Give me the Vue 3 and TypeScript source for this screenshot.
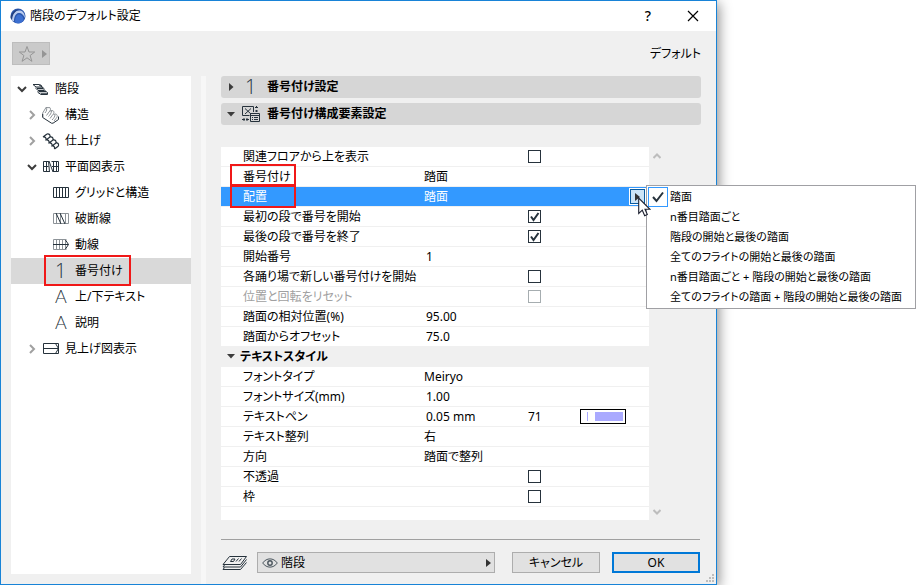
<script setup lang="ts">
import { ref } from 'vue'

interface TreeItem {
  label: string
  icon: string
  level: number
  state?: 'open' | 'closed'
  selected?: boolean
}

interface Row {
  id: string
  label: string
  kind: 'check' | 'choice' | 'number' | 'pen' | 'section'
  value?: string
  checked?: boolean
  disabled?: boolean
  marked?: boolean
  active?: boolean
}

const tree: TreeItem[] = [
  { label: '階段', icon: 'stair', level: 0, state: 'open' },
  { label: '構造', icon: 'structure', level: 1, state: 'closed' },
  { label: '仕上げ', icon: 'finish', level: 1, state: 'closed' },
  { label: '平面図表示', icon: 'plan', level: 1, state: 'open' },
  { label: 'グリッドと構造', icon: 'grid', level: 2 },
  { label: '破断線', icon: 'break', level: 2 },
  { label: '動線', icon: 'walk', level: 2 },
  { label: '番号付け', icon: 'number', level: 2, selected: true },
  { label: '上/下テキスト', icon: 'letter', level: 2 },
  { label: '説明', icon: 'letter', level: 2 },
  { label: '見上げ図表示', icon: 'ceiling', level: 1, state: 'closed' },
]

const rows = ref<Row[]>([
  { id: 'stories', label: '関連フロアから上を表示', kind: 'check', checked: false },
  { id: 'numbering', label: '番号付け', kind: 'choice', value: '踏面', marked: true },
  { id: 'placement', label: '配置', kind: 'choice', value: '踏面', marked: true, active: true },
  { id: 'first', label: '最初の段で番号を開始', kind: 'check', checked: true },
  { id: 'last', label: '最後の段で番号を終了', kind: 'check', checked: true },
  { id: 'start', label: '開始番号', kind: 'number', value: '1' },
  { id: 'landing', label: '各踊り場で新しい番号付けを開始', kind: 'check', checked: false },
  { id: 'reset', label: '位置と回転をリセット', kind: 'check', checked: false, disabled: true },
  { id: 'relative', label: '踏面の相対位置(%)', kind: 'number', value: '95.00' },
  { id: 'offset', label: '踏面からオフセット', kind: 'number', value: '75.0' },
  { id: 'style', label: 'テキストスタイル', kind: 'section' },
  { id: 'font', label: 'フォントタイプ', kind: 'choice', value: 'Meiryo' },
  { id: 'size', label: 'フォントサイズ(mm)', kind: 'number', value: '1.00' },
  { id: 'pen', label: 'テキストペン', kind: 'pen', value: '0.05 mm' },
  { id: 'align', label: 'テキスト整列', kind: 'choice', value: '右' },
  { id: 'direction', label: '方向', kind: 'choice', value: '踏面で整列' },
  { id: 'opaque', label: '不透過', kind: 'check', checked: false },
  { id: 'frame', label: '枠', kind: 'check', checked: false },
])

const penIndex = ref('71')
const layer = ref('階段')

const choices: string[] = [
  '踏面',
  'n番目踏面ごと',
  '階段の開始と最後の踏面',
  '全てのフライトの開始と最後の踏面',
  'n番目踏面ごと + 階段の開始と最後の踏面',
  '全てのフライトの踏面 + 階段の開始と最後の踏面',
]
</script>

<template>
  <div class="page">
    <section class="dialog" role="dialog" aria-labelledby="dialog-title">
      <header class="titlebar">
        <svg class="logo" viewBox="0 0 16 16" aria-hidden="true">
          <circle cx="8" cy="8" r="7.5" fill="#2b57ad" />
          <path d="M1 11C2 5 6 2 10 2.500C13 3 15 6 15 10C13 6 11 4.500 8.500 5C5.500 5.500 4 9 4 13.500C2.500 13 1.500 12 1 11Z" fill="#b9cbee" />
          <path d="M5 14.500C5 9 7 6.500 9 6.500C11.500 6.500 13.500 9 13.500 12.500C11 15.500 8 16 5 14.500Z" fill="#3c6fd0" />
          <path d="M.5 10C1 5 5 1 9.500 1.200C5.500 2.500 2.500 6 2 12Z" fill="#23407f" />
        </svg>
        <h1 id="dialog-title">階段のデフォルト設定</h1>
        <button class="caption help" type="button">?</button>
        <button class="caption close" type="button" aria-label="閉じる">
          <svg viewBox="0 0 12 12"><path d="M1 1L11 11M11 1L1 11" fill="none" stroke="#000" stroke-width="1.200" /></svg>
        </button>
      </header>

      <div class="toolbar">
        <button class="favorite" type="button" aria-label="お気に入り">
          <svg class="star" viewBox="0 0 18 18"><path d="M9 1.500L11 7H16.700L12.100 10.500L13.900 16.300L9 12.800L4.100 16.300L5.900 10.500L1.300 7H7Z" fill="none" stroke="#959595" /></svg>
          <svg class="arrow" viewBox="0 0 5 8"><path d="M0 0L5 4L0 8Z" fill="#959595" /></svg>
        </button>
        <span>デフォルト</span>
      </div>

      <div class="main">
        <ul class="tree">
          <li v-for="item in tree" :key="item.label" :class="['node', 'level' + item.level, { selected: item.selected }]">
            <span class="twisty">
              <svg v-if="item.state === 'open'" viewBox="0 0 16 16"><path d="M4 6L8 10L12 6" fill="none" stroke="#3c3c3c" stroke-width="2" /></svg>
              <svg v-if="item.state === 'closed'" viewBox="0 0 16 16"><path d="M6 4L10 8L6 12" fill="none" stroke="#a0a0a0" stroke-width="2" /></svg>
            </span>
            <svg class="icon" viewBox="0 0 18 18" aria-hidden="true" fill="none" stroke="#26323c">
              <template v-if="item.icon === 'stair'">
                <path d="M1 4.500H7L10 7H4ZM4 7.500V8.500L6 10.500H12V8.500L10 7M6 11V12.500L9 14.500H15.500V12.500L12.500 10.500M7 5H9L10 7" />
                <path d="M5 8.500H11M7 11.500H14M9 14H15" stroke-width="1.500" />
              </template>
              <template v-else-if="item.icon === 'structure'">
                <path d="M.7 11V7L4 1.500L8 1.700C9 3 8.500 4.500 7 6L4.500 9.500M8 5L10 4.500C13 5 12 7.500 10.500 9L8 12.500M11.500 8.500L13.500 8C16 8.500 15.500 11 14 12.500L12 15M4 1.500C5.500 3 4.500 5 3 7M9.500 5C9.500 7 8 9 6.500 10.500M13 8.500C13 10.500 12 12 10 14" stroke="#8d9398" />
                <path d="M.7 8V11.500L9.500 17.200H11L16.500 13.500V10.500" />
              </template>
              <template v-else-if="item.icon === 'finish'">
                <path d="M5 2Q8.500 1.500 8 5Q11.500 4.500 11 8Q14.500 7.500 14 11Q17 10.500 16.500 14M1 5Q4.500 4.500 4 8Q7.500 7.500 7 11Q10.500 10.500 10 14Q13 13.500 12.500 17M5 2L1 5M8 5L4 8M11 8L7 11M14 11L10 14M16.500 14L12.500 17" stroke-width="1.200" />
              </template>
              <template v-else-if="item.icon === 'plan'">
                <path d="M6.500 3.500H1.500V13.500H7.500M4.500 3V14M1.500 8.500H6.500M9.500 3.500H16.500V13.500H11M11.500 3V14M14.500 3V14M10 8.500H17" />
                <path d="M6.500 3L7.500 14M7 3L11 14" />
              </template>
              <path v-else-if="item.icon === 'grid'" d="M1.500 3.500H16.500V13.500H1.500ZM4.500 3V14M7.500 3V14M10.500 3V14M13.500 3V14" />
              <template v-else-if="item.icon === 'break'">
                <path d="M1.500 3.500H16.500V13.500H1.500ZM4.500 3V14M13.500 3V14M8.500 3.500V14" stroke="#8d9398" />
                <path d="M4 3L9 14M8 3L13 14" />
              </template>
              <template v-else-if="item.icon === 'walk'">
                <path d="M14.500 3.500H1.500V13.500H14.500M4.500 3V14M7.500 3V14M10.500 3V14M13.500 3V14" stroke="#8d9398" />
                <path d="M1 8.500H16.500M13.500 4L16.500 8.500L13.500 13" />
              </template>
              <text v-else-if="item.icon === 'number'" class="glyph" x="3" y="16">1</text>
              <text v-else-if="item.icon === 'letter'" class="glyph letter" x="3" y="15">A</text>
              <path v-else d="M1.500 3.500H16.500V13.500H1.500ZM1.500 8.500H16.500M13.500 3.500L16.500 8.500L13.500 13.500" />
            </svg>
            <a href="#">{{ item.label }}</a>
            <span v-if="item.selected" class="mark tree-mark"></span>
          </li>
        </ul>
        <div class="splitter"></div>

        <div class="panel">
          <button class="section" type="button" aria-expanded="false">
            <svg class="fold" viewBox="0 0 10 10"><path d="M3 1L7.500 5L3 9Z" fill="#3c3c3c" /></svg>
            <svg class="icon" viewBox="0 0 18 18"><text class="glyph" x="3" y="16">1</text></svg>
            <span>番号付け設定</span>
          </button>
          <button class="section" type="button" aria-expanded="true">
            <svg class="fold" viewBox="0 0 10 10"><path d="M1 3H9L5 7.500Z" fill="#3c3c3c" /></svg>
            <svg class="icon" viewBox="0 0 18 18" fill="none" stroke="#26323c">
              <path d="M7.500 10.500H.5V1.500H11.500V7M3 3.500L9 9M9 3.500L3 9" />
              <path d="M8.500 8.500H17.500V16.500H8.500ZM8.500 10.500H17.500M10 12.500H11M12 12.500H16M10 14.500H11M12 14.500H16" />
              <path d="M13 2.500H16M14.500 1V3M13 6H16M14.500 5V7M0 14.500H3M2 13V16M4 14.500H7M5 13V16" />
            </svg>
            <span>番号付け構成要素設定</span>
          </button>

          <div class="list">
            <div class="sheet">
              <table>
                <colgroup><col class="c-name" /><col class="c-value" /><col class="c-extra" /><col /></colgroup>
                <tbody>
                  <tr v-for="row in rows" :key="row.id" :class="{ active: row.active, group: row.kind === 'section' }">
                    <th v-if="row.kind === 'section'" colspan="4" scope="colgroup">
                      <svg class="fold" viewBox="0 0 10 10"><path d="M1 3H9L5 7.500Z" fill="#3c3c3c" /></svg>{{ row.label }}
                    </th>
                    <template v-else>
                      <th scope="row" :class="{ disabled: row.disabled }">
                        <label :for="row.id">{{ row.label }}</label>
                        <span v-if="row.marked" class="mark row-mark"></span>
                      </th>
                      <td>
                        <input v-if="row.kind === 'number' || row.kind === 'pen'" :id="row.id" v-model="row.value" class="field" type="text" />
                        <output v-else-if="row.kind === 'choice'" :id="row.id">{{ row.value }}</output>
                      </td>
                      <td>
                        <span v-if="row.kind === 'check'" class="check">
                          <input :id="row.id" v-model="row.checked" type="checkbox" :disabled="row.disabled" />
                          <svg v-if="row.checked" viewBox="0 0 13 13"><path d="M3 6.500L5.500 10L10.500 3" fill="none" stroke="#26323c" stroke-width="2" /></svg>
                        </span>
                        <input v-if="row.kind === 'pen'" v-model="penIndex" class="pen-index" type="text" aria-label="ペン番号" />
                      </td>
                      <td>
                        <button v-if="row.kind === 'pen'" class="swatch" type="button" aria-label="ペンの色"><i></i><b></b></button>
                        <div v-if="row.active" class="popup-anchor">
                          <button class="expand" type="button" aria-label="配置の選択肢" aria-haspopup="menu">
                            <svg viewBox="0 0 5 8"><path d="M0 0L5 4L0 8Z" fill="#333" /></svg>
                          </button>
                          <div class="menu" role="menu">
                            <button v-for="(choice, i) in choices" :key="choice" type="button" role="menuitemradio" :aria-checked="i === 0">
                              <span :class="['tick', { on: i === 0 }]">
                                <svg v-if="i === 0" viewBox="0 0 18 18"><path d="M4 9L7.500 13L14 4.500" fill="none" stroke="#26323c" stroke-width="2" /></svg>
                              </span>
                              <span>{{ choice }}</span>
                            </button>
                          </div>
                          <svg class="pointer" viewBox="0 0 13 20" aria-hidden="true">
                            <path d="M.7 1V16.500L4.300 13.200L6.700 18.700L9.300 17.500L7 12.300H12Z" fill="#fff" stroke="#1c2030" stroke-width="1.100" />
                          </svg>
                        </div>
                      </td>
                    </template>
                  </tr>
                </tbody>
              </table>
            </div>
            <div class="scroll">
              <svg viewBox="0 0 8 6"><path d="M.5 5L4 1.500L7.500 5" fill="none" stroke="#bdbdbd" stroke-width="2" /></svg>
              <svg viewBox="0 0 8 6"><path d="M.5 1L4 4.500L7.500 1" fill="none" stroke="#bdbdbd" stroke-width="2" /></svg>
            </div>
          </div>

          <footer>
            <svg class="layers" viewBox="0 0 26 16" fill="none" stroke="#26323c" aria-hidden="true">
              <path d="M1 9.500L7.500 1.500H24.500L18.500 9.500Z" fill="#f0f0f0" />
              <path d="M8.500 6.500L10 4H13L11.500 6.500ZM14 6.500L16.500 3.500M17 6.500L19.500 3.500" />
              <path d="M2.500 10L1 12H18.500L24.500 4.500M2.500 12.500L1 14.500H18.500L24.500 7.500" />
            </svg>
            <div class="layer">
              <svg class="eye" viewBox="0 0 16 10" fill="none" stroke="#4a555d" aria-hidden="true"><path d="M.7 5C4.500-.5 11.500-.5 15.300 5C11.500 10.500 4.500 10.500 .7 5Z" /><circle cx="8" cy="5" r="2.200" stroke-width="1.400" /></svg>
              <select v-model="layer" aria-label="レイヤー"><option>階段</option></select>
              <svg class="arrow" viewBox="0 0 5 8"><path d="M0 0L5 4L0 8Z" fill="#333" /></svg>
            </div>
            <button class="push" type="button">キャンセル</button>
            <button class="push primary" type="button">OK</button>
          </footer>
        </div>
      </div>
      <svg class="grip" viewBox="0 0 8 8" fill="#bdbdbd" aria-hidden="true"><path d="M6 0H8V2H6ZM3 3H5V5H3ZM6 3H8V5H6ZM0 6H2V8H0ZM3 6H5V8H3ZM6 6H8V8H6Z" /></svg>
    </section>
  </div>
</template>

<style>
body {
  margin: 0;
  background: #fff;
}
</style>

<style scoped>
* {
  box-sizing: border-box;
}
.page {
  display: flex;
  min-height: 100vh;
  padding-right: 199px;
  overflow: hidden;
  color: #000;
  font: 12px/20px "Noto Sans", "Noto Sans CJK JP", sans-serif;
  font-feature-settings: "palt";
}
button,
input,
select {
  margin: 0;
  padding: 0;
  border: 0;
  background: none;
  color: inherit;
  font: inherit;
  font-feature-settings: inherit;
}
svg {
  display: block;
  flex: none;
}
.dialog {
  position: relative;
  display: flex;
  flex: 1;
  flex-direction: column;
  min-width: 0;
  border: 1px solid #1883d7;
  background: #f0f0f0;
  box-shadow: 2px 3px 12px rgba(0, 0, 0, 0.45);
}
.titlebar {
  display: flex;
  align-items: center;
  height: 30px;
  padding: 0 17px 0 9px;
  background: #fff;
}
.logo {
  width: 16px;
  height: 16px;
}
h1 {
  flex: 1;
  margin: 0 0 0 4px;
  font-size: 12px;
  font-weight: 400;
}
.caption {
  display: grid;
  place-items: center;
  width: 12px;
  height: 20px;
}
.help {
  margin-right: 33px;
  font-size: 14px;
  font-weight: 500;
}
.close svg {
  width: 12px;
  height: 12px;
}
.toolbar {
  display: flex;
  align-items: center;
  justify-content: space-between;
  height: 45px;
  padding: 0 15px 0 11px;
}
.favorite {
  display: flex;
  align-items: center;
  gap: 6px;
  width: 38px;
  height: 23px;
  padding-left: 5px;
  border: 1px solid #bdbdbd;
  background: #cacaca;
}
.star {
  width: 18px;
  height: 18px;
}
.arrow {
  width: 5px;
  height: 8px;
}
.main {
  display: flex;
  flex: 1;
  padding-left: 10px;
}
.tree {
  width: 180px;
  margin: 0 10px 10px 0;
  padding: 0;
  background: #fff;
  list-style: none;
}
.node {
  position: relative;
  display: flex;
  align-items: center;
  height: 26px;
  padding-left: 3px;
}
.level1 {
  padding-left: 13px;
}
.level2 {
  padding-left: 23px;
}
.selected {
  background: #d9d9d9;
}
.node a {
  margin-left: 5px;
  color: inherit;
  text-decoration: none;
}
.twisty {
  width: 16px;
  height: 16px;
  margin-right: 2px;
}
.icon {
  width: 18px;
  height: 18px;
  overflow: visible;
}
.glyph {
  fill: #26323c;
  stroke: none;
  font-family: "Open Sans", "Noto Sans", sans-serif;
  font-size: 20px;
  font-weight: 300;
}
.letter {
  font-family: Lato, "Noto Sans", sans-serif;
  font-size: 18px;
}
.mark {
  position: absolute;
  border: 2px solid #f01818;
  pointer-events: none;
}
.tree-mark {
  top: -3px;
  left: 33px;
  width: 87px;
  height: 31px;
}
.row-mark {
  top: -3px;
  left: 9px;
  width: 66px;
  height: 24px;
}
.splitter {
  width: 5px;
  background: #f7f7f7;
}
.panel {
  display: flex;
  flex: 1;
  flex-direction: column;
  min-width: 0;
  padding: 0 15px 11px;
}
.section {
  display: flex;
  align-items: center;
  height: 22px;
  margin-bottom: 5px;
  padding-left: 5px;
  border-radius: 3px;
  background: #d6d6d6;
  font-weight: 700;
}
.section .icon {
  margin: 0 7px 0 6px;
}
.fold {
  width: 10px;
  height: 10px;
}
.list {
  display: flex;
  flex: 1;
  margin-top: 17px;
}
.sheet {
  flex: 1;
  background: #fff;
}
.scroll {
  display: flex;
  flex-direction: column;
  justify-content: space-between;
  width: 52px;
  padding: 6px 4px 5px;
}
.scroll svg {
  width: 8px;
  height: 6px;
}
table {
  width: 100%;
  border-collapse: separate;
  border-spacing: 0;
  table-layout: fixed;
}
.c-name {
  width: 203px;
}
.c-value {
  width: 104px;
}
.c-extra {
  width: 52px;
}
th,
td {
  position: relative;
  height: 20px;
  padding: 0;
  border-bottom: 1px solid #f0f0f0;
  line-height: 19px;
  text-align: left;
  font-weight: 400;
  white-space: nowrap;
}
th[scope="row"] {
  padding-left: 22px;
}
.disabled {
  color: #a0a0a0;
}
.active th,
.active td {
  background: #3399ff;
  color: #fff;
}
.group th {
  padding-left: 5px;
  background: #f0f0f0;
  font-weight: 700;
}
.group .fold {
  display: inline-block;
  margin-right: 4px;
}
.field,
.pen-index {
  display: block;
  width: 90px;
  height: 19px;
  padding-left: 2px;
}
.pen-index {
  width: 40px;
  padding-left: 0;
}
.check {
  display: grid;
  width: 13px;
  height: 13px;
}
.check > * {
  grid-area: 1 / 1;
  width: 13px;
  height: 13px;
}
.check input {
  appearance: none;
  border: 1px solid #26323c;
  background: #fff;
}
.check input:disabled {
  border-color: #a6adb0;
}
.check svg {
  pointer-events: none;
}
.swatch {
  display: flex;
  gap: 7px;
  width: 46px;
  height: 15px;
  padding: 2px 2px 2px 6px;
  border: 1px solid #000;
  background: #fff;
}
.swatch i {
  width: 1px;
  height: 9px;
  background: #aaaaff;
}
.swatch b {
  flex: 1;
  height: 9px;
  background: #aaaaff;
}
.popup-anchor {
  position: absolute;
  top: 1px;
  right: 3px;
}
.expand {
  display: grid;
  place-items: center;
  width: 17px;
  height: 17px;
  border: 1px solid #fff;
  background: #cce4f7;
  box-shadow: inset 0 0 0 1px #0a5a9e;
}
.expand svg {
  width: 5px;
  height: 8px;
}
.menu {
  position: absolute;
  top: -3px;
  left: 17px;
  z-index: 2;
  width: 270px;
  padding: 1px;
  border: 1px solid #a0a0a4;
  background: #fff;
  color: #000;
  font-size: 11px;
}
.menu button {
  display: flex;
  align-items: center;
  gap: 2px;
  width: 100%;
  height: 20px;
  line-height: 20px;
}
.tick {
  flex: none;
  width: 20px;
  height: 20px;
  border: 1px solid transparent;
}
.tick.on {
  border-color: #3399ff;
}
.pointer {
  position: absolute;
  top: 9px;
  left: 9px;
  z-index: 3;
  width: 13px;
  height: 20px;
}
footer {
  display: flex;
  align-items: center;
  margin: 19px 1px 0 0;
  padding-top: 12px;
  border-top: 1px solid #a0a0a0;
}
.layers {
  width: 26px;
  height: 16px;
  margin: 0 9px 0 1px;
}
.layer {
  display: flex;
  flex: 1;
  align-items: center;
  height: 21px;
  margin-right: 17px;
  padding: 0 3px 0 4px;
  border: 1px solid #adadad;
  background: #e1e1e1;
}
.eye {
  width: 16px;
  height: 10px;
}
.layer select {
  flex: 1;
  height: 19px;
  padding-left: 3px;
  appearance: none;
}
.push {
  width: 88px;
  height: 21px;
  border: 1px solid #adadad;
  background: #e1e1e1;
  line-height: 17px;
}
.push + .push {
  margin-left: 12px;
}
.primary {
  border: 2px solid #0078d7;
}
.grip {
  position: absolute;
  right: 2px;
  bottom: 2px;
  width: 8px;
  height: 8px;
}
</style>
